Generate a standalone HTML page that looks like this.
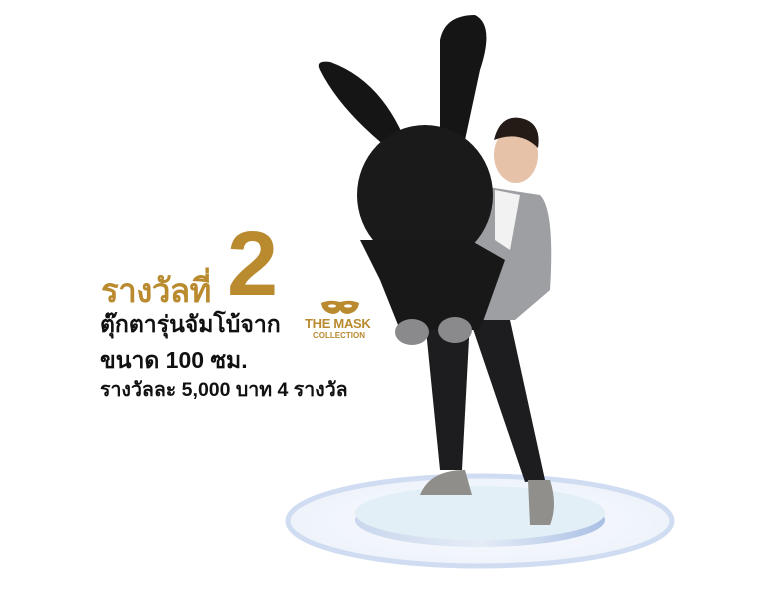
<!DOCTYPE html>
<html><head><meta charset="utf-8"><style>
body{margin:0;width:768px;height:593px;background:#fff;position:relative;overflow:hidden;font-family:"Liberation Sans","DejaVu Sans",sans-serif}
.t{position:absolute;white-space:nowrap;font-weight:bold}
</style></head><body>
<svg width="768" height="593" style="position:absolute;left:0;top:0">
<defs>
<radialGradient id="o" cx="50%" cy="50%" r="50%"><stop offset="0" stop-color="#fbfcfe"/><stop offset="1" stop-color="#eef3fb"/></radialGradient>
<linearGradient id="e" x1="0" x2="1"><stop offset="0" stop-color="#c9d6ec"/><stop offset=".5" stop-color="#e5ecf7"/><stop offset="1" stop-color="#aac0e4"/></linearGradient>
</defs>
<ellipse cx="480" cy="521" rx="192" ry="45" fill="url(#o)" stroke="#cfdcf1" stroke-width="5"/>
<ellipse cx="480" cy="520" rx="125" ry="27" fill="url(#e)"/>
<ellipse cx="480" cy="513" rx="125" ry="27" fill="#e3eff7"/>
<path d="M425 320 L470 320 L462 470 L440 470 Z" fill="#1d1d20"/>
<path d="M470 320 L510 320 L545 480 L525 482 Z" fill="#1d1d20"/>
<path d="M420 495 Q430 470 465 470 L472 495 Z" fill="#8f8e8a"/>
<path d="M528 480 L550 480 Q558 505 550 525 L530 525 Z" fill="#908f8b"/>
<path d="M475 185 L540 195 Q555 210 550 290 L515 320 L470 320 Z" fill="#9e9fa3"/>
<path d="M495 190 L520 195 L510 250 L495 240 Z" fill="#f2f2f2"/>
<ellipse cx="516" cy="155" rx="22" ry="28" fill="#e6c3a8"/>
<path d="M494 140 Q500 115 520 118 Q542 122 538 148 Q520 130 494 140Z" fill="#241a16"/>
<path d="M320 70 Q315 60 330 62 Q380 80 405 140 L390 150 Q340 110 320 70Z" fill="#151515"/>
<path d="M440 40 Q445 15 475 15 Q495 25 480 70 L465 140 L440 135 Z" fill="#151515"/>
<ellipse cx="425" cy="195" rx="68" ry="70" fill="#1a1a1a"/>
<path d="M360 240 L470 240 L505 260 L480 330 L400 330 L380 280 Z" fill="#181818"/>
<ellipse cx="412" cy="332" rx="17" ry="13" fill="#8a8a8c"/>
<ellipse cx="455" cy="330" rx="17" ry="13" fill="#8a8a8c"/>
<path d="M321 303 Q330 299 340 302 Q350 299 359 303 Q358 312 348 314 Q342 314 340 310 Q338 314 332 314 Q322 312 321 303Z" fill="#b98a2e"/>
<ellipse cx="332" cy="306" rx="4" ry="1.6" fill="#fff"/><ellipse cx="348" cy="306" rx="4" ry="1.6" fill="#fff"/>
</svg>
<div class="t" style="left:101px;top:264px;font-size:33px;color:#b98a2e;letter-spacing:-0.5px">รางวัลที่</div>
<div class="t" style="left:227px;top:218px;font-size:92px;color:#b98a2e;line-height:1">2</div>
<div class="t" style="left:100px;top:306px;font-size:23px;color:#111;line-height:36px">ตุ๊กตารุ่นจัมโบ้จาก<br>ขนาด 100 ซม.</div>
<div class="t" style="left:100px;top:374px;font-size:19.5px;color:#111">รางวัลละ 5,000 บาท 4 รางวัล</div>
<div class="t" style="left:305px;top:316px;font-size:13px;color:#b98a2e;letter-spacing:-.3px">THE MASK</div>
<div class="t" style="left:313px;top:331px;font-size:8px;color:#b98a2e">COLLECTION</div>
</body></html>
